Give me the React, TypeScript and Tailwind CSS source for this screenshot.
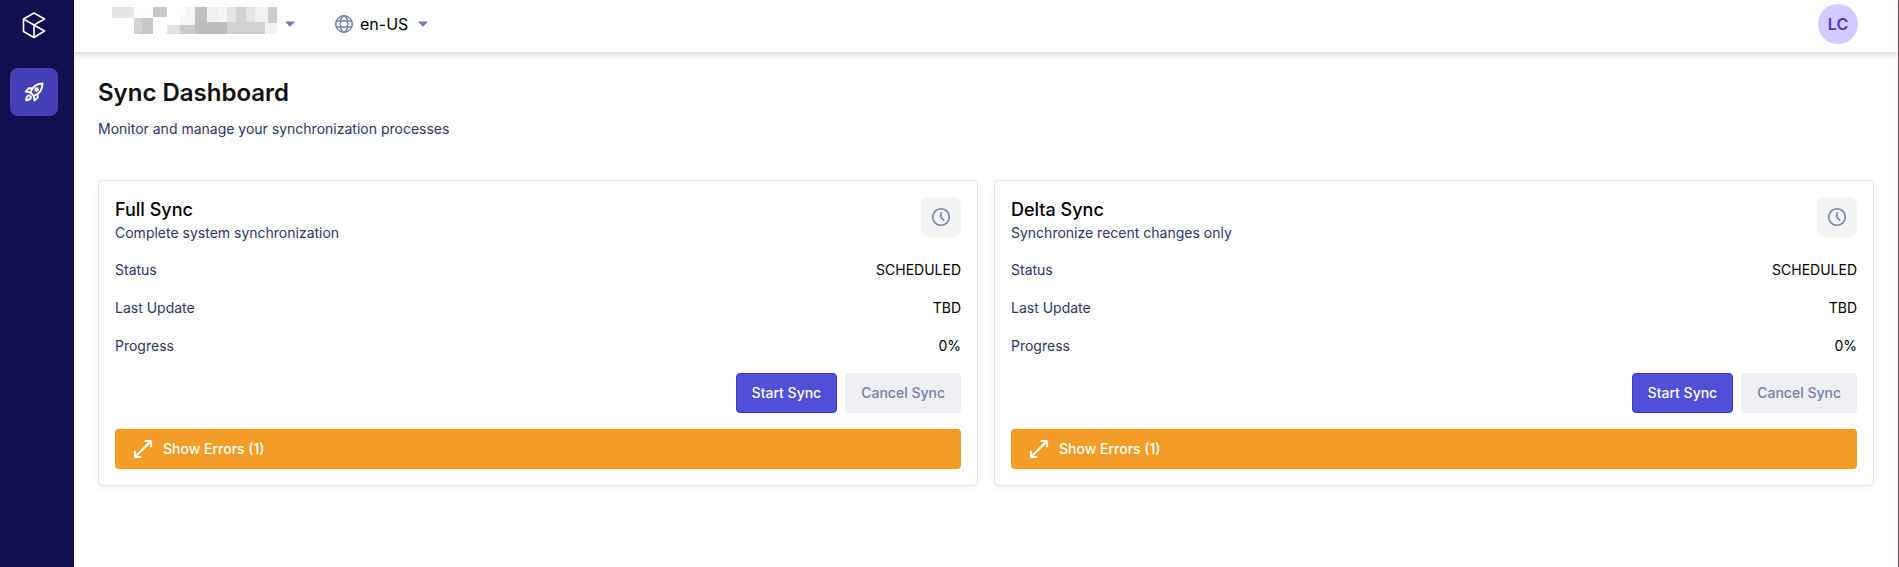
import React from "react";

type Cell = [x: number, y: number, w: number, h: number, fill: string];

const redactedCells: Cell[] = [
  [36, 21, 66, 33, "#e5e5e5"],
  [102, 21, 57, 33, "#fcfcfc"],
  [159, 21, 42, 30, "#c8c8c8"],
  [102, 54, 24, 48, "#d3d3d3"],
  [126, 54, 33, 48, "#c8c8c8"],
  [201, 75, 39, 27, "#e3e3e3"],
  [240, 75, 45, 27, "#cacaca"],
  [232, 21, 26, 30, "#fcfcfc"],
  [258, 21, 27, 30, "#f5f5f5"],
  [240, 51, 45, 24, "#f5f5f5"],
  [285, 21, 36, 45, "#c0c0c0"],
  [321, 21, 36, 45, "#f0f0f0"],
  [357, 21, 24, 45, "#f5f5f5"],
  [381, 21, 27, 45, "#e5e5e5"],
  [408, 21, 30, 45, "#d3d3d3"],
  [438, 21, 27, 45, "#e5e5e5"],
  [465, 21, 39, 48, "#f2f2f2"],
  [504, 21, 27, 48, "#cbcbcb"],
  [285, 66, 96, 36, "#bdbdbd"],
  [381, 66, 114, 36, "#d2d2d2"],
  [495, 69, 36, 33, "#f3f3f3"],
];

function Logo() {
  return (
    <svg viewBox="0 0 24 28" className="h-7 w-6" fill="none" stroke="#fff" strokeWidth="1.6" strokeLinejoin="round" aria-hidden="true">
      <path d="M12 2 22.500 8 12 14 1.500 8Z" />
      <path d="M1.500 8v12.500L12 26.500V14" />
      <path d="M12 14l10.500 6L12 26.500" />
    </svg>
  );
}

function Rocket() {
  return (
    <svg viewBox="0 0 20 20" className="size-5" fill="none" stroke="#fff" strokeWidth="1.9" strokeLinejoin="round" strokeLinecap="round" aria-hidden="true">
      <path d="M6.500 10.500C8 5.500 11.500 1.800 18.500 1.500 18.500 8 15 12 9.800 13.800Z" />
      <circle cx="12.600" cy="7.400" r="1.300" />
      <path d="M8 6.500 4.500 6.300 1.800 9.500l4.700 1M13.500 12l.2 3.500-3.200 3-.9-4.600" />
      <path d="M5.600 13.400c-2 0-3.300 1.300-3.500 4.800 3.500-.2 4.800-1.500 4.800-3.500Z" />
    </svg>
  );
}

function Caret() {
  return (
    <svg viewBox="0 0 10 6" className="h-1.5 w-2.5" fill="#757fab" aria-hidden="true">
      <path d="M1.200.5h7.600c.6 0 .8.5.4.9L5.500 5.300a.7.7 0 0 1-1 0L.8 1.400C.4 1 .6.5 1.200.5Z" />
    </svg>
  );
}

function Globe() {
  return (
    <svg viewBox="0 0 20 20" className="size-5" fill="none" stroke="#757fab" strokeWidth="1.4" aria-hidden="true">
      <circle cx="10" cy="10" r="8.300" />
      <ellipse cx="10" cy="10" rx="3.800" ry="8.300" />
      <path d="M2.300 7h15.400M2.300 13h15.400" />
    </svg>
  );
}

function Clock() {
  return (
    <svg viewBox="0 0 20 20" className="size-5" fill="none" stroke="#757fab" strokeWidth="1.6" strokeLinecap="round" strokeLinejoin="round" aria-hidden="true">
      <circle cx="10" cy="10" r="8.300" />
      <path d="M10 5.800V10.300l2.700 2.900" />
    </svg>
  );
}

function Expand() {
  return (
    <svg viewBox="0 0 20 20" className="size-5" fill="none" stroke="#fff" strokeWidth="2.2" strokeLinecap="round" strokeLinejoin="round" aria-hidden="true">
      <path d="M12.500 2H18v5.500M18 2 2 18M2 12.500V18h5.500" />
    </svg>
  );
}

function SyncCard({ title, description }: { title: string; description: string }) {
  const rows = [
    ["Status", "SCHEDULED"],
    ["Last Update", "TBD"],
    ["Progress", "0%"],
  ];
  return (
    <section className="flex flex-col gap-4 rounded border border-[#e1e1ef] bg-white p-4 shadow-[0_2px_8px_rgba(0,0,0,0.05)]">
      <div className="flex items-start justify-between">
        <div>
          <h2 className="text-lg leading-[26px] font-medium text-black">{title}</h2>
          <p className="text-sm leading-5 text-[#2c3669]">{description}</p>
        </div>
        <div className="flex size-10 items-center justify-center rounded-lg bg-[#f3f4f6]">
          <Clock />
        </div>
      </div>
      <dl className="flex flex-col gap-4 text-sm leading-[22px]">
        {rows.map(([label, value]) => (
          <div key={label} className="flex justify-between">
            <dt className="text-[#2c3669]">{label}</dt>
            <dd className="text-black">{value}</dd>
          </div>
        ))}
      </dl>
      <div className="flex justify-end gap-2">
        <button type="button" className="h-10 rounded border border-[#3d35c9] bg-[#4f4fd9] px-[15px] text-sm font-medium text-white">
          Start Sync
        </button>
        <button type="button" disabled className="h-10 rounded bg-[#eff0f5] px-4 text-sm font-medium text-[#757fab]">
          Cancel Sync
        </button>
      </div>
      <button type="button" className="flex h-10 items-center gap-2.5 rounded bg-[#f39c26] px-[18px] text-sm font-medium text-white">
        <Expand />
        Show Errors (1)
      </button>
    </section>
  );
}

export default function App() {
  return (
    <div className="flex min-h-screen border-r border-[#83445a] bg-white font-['Inter',sans-serif]">
      <nav className="flex w-[74px] shrink-0 flex-col items-center bg-[#110f4f] pt-[11px] pr-[6px]">
        <a href="#home" aria-label="Home">
          <Logo />
        </a>
        <a href="#launch" aria-label="Launch" className="mt-[29px] flex size-12 items-center justify-center rounded-lg bg-[#4341b5]">
          <Rocket />
        </a>
      </nav>
      <div className="flex min-w-0 flex-1 flex-col">
        <header className="flex h-[52px] items-center bg-white pr-10 pb-1 pl-[38px] shadow-[0_2px_6px_rgba(0,0,0,0.2)]">
          <button type="button" aria-label="Organization" className="flex items-center gap-2">
            <svg viewBox="36 21 495 81" className="mb-2 h-[27px] w-[165px]" shapeRendering="crispEdges" aria-hidden="true">
              {redactedCells.map(([x, y, w, h, fill]) => (
                <rect key={`${x}-${y}`} x={x} y={y} width={w} height={h} fill={fill} />
              ))}
            </svg>
            <Caret />
          </button>
          <button type="button" className="ml-[39px] flex items-center text-base text-black">
            <Globe />
            <span className="ml-1.5">en-US</span>
            <span className="ml-2.5">
              <Caret />
            </span>
          </button>
          <button type="button" className="ml-auto size-10 rounded-full bg-[#d3cbff] text-base font-semibold text-[#4a35c9]">
            LC
          </button>
        </header>
        <main className="p-6">
          <h1 className="text-2xl leading-[34px] font-semibold text-[#111]">Sync Dashboard</h1>
          <p className="mt-1.5 text-sm leading-[26px] text-[#2c3669]">Monitor and manage your synchronization processes</p>
          <div className="mt-[38px] grid grid-cols-2 gap-4">
            <SyncCard title="Full Sync" description="Complete system synchronization" />
            <SyncCard title="Delta Sync" description="Synchronize recent changes only" />
          </div>
        </main>
      </div>
    </div>
  );
}
